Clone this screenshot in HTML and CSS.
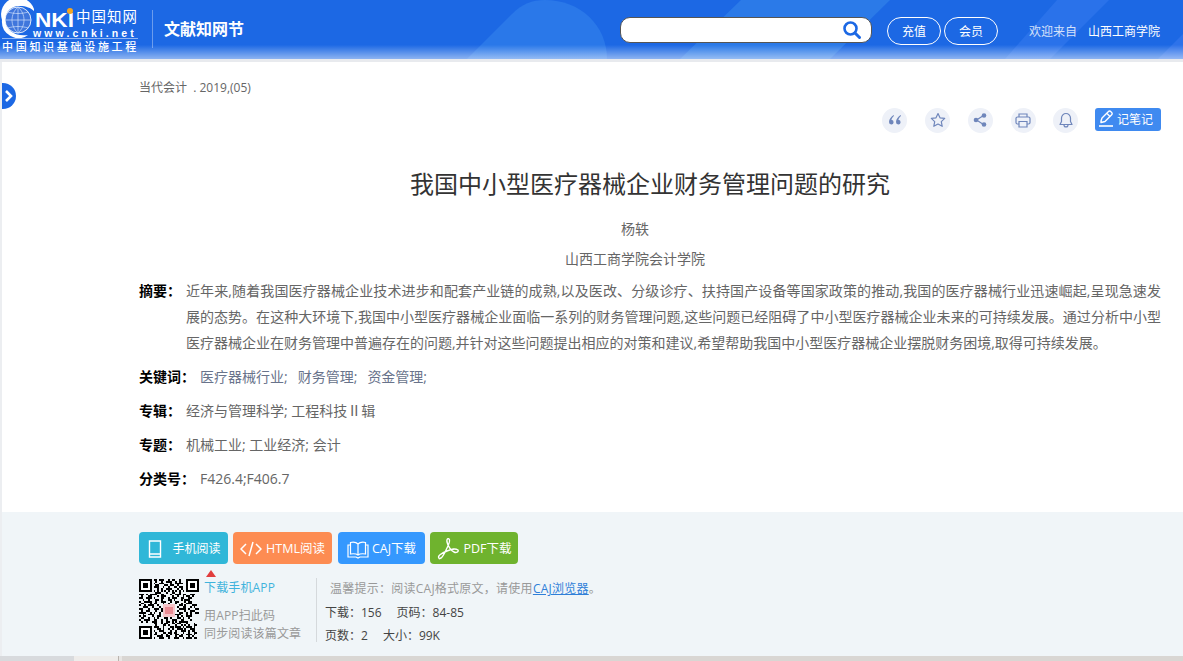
FILE: index.html
```html
<!DOCTYPE html>
<html lang="zh-CN">
<head>
<meta charset="utf-8">
<title>我国中小型医疗器械企业财务管理问题的研究</title>
<link rel="stylesheet" href="styles.css">
</head>
<body>
<header class="topbar">
  <svg class="topbar-art" width="1183" height="59" viewBox="0 0 1183 59">
    <defs>
      <linearGradient id="fade" x1="0" y1="0" x2="0" y2="1"><stop offset=".76" stop-color="#fff" stop-opacity="0"/><stop offset="1" stop-color="#fff" stop-opacity=".5"/></linearGradient>
    </defs>
    <path d="M467 59L512 14C522 4 532 0 545 0C580 0 607 25 607 59Z" fill="#2a78e9"/>
    <path d="M680 59L741 0H890L830 59Z" fill="#2b7ae8"/>
    <path d="M1005 59L1057 0H1109L1050 59Z" fill="#2a72ea"/>
    <path d="M1158 59L1183 34V59Z" fill="#2d72ea"/>
    <rect width="1183" height="59" fill="url(#fade)"/>
  </svg>
  <div class="logo">
    <svg class="logo-globe" width="36" height="38" viewBox="0 0 36 38">
      <circle cx="18" cy="20" r="13" fill="#3f76dc" stroke="#dfe9fa" stroke-width="1"/>
      <path d="M5 20h26M18 7v26M8 12c6 2 14 2 20 0M8 28c6-2 14-2 20 0M18 7c-8 7-8 19 0 26M18 7c8 7 8 19 0 26" fill="none" stroke="#cfe0fa" stroke-width=".7"/>
      <path d="M34 9A16.500 16.500 0 0 0 2 20A16.500 16.500 0 0 0 28 35C15 37 5.500 30 5 20C5.500 11 12 5.500 20 6C26 6 31 8 34 11Z" fill="#fff"/>
    </svg>
    <span class="logo-nki">NKI</span>
    <span class="logo-dot"></span>
    <span class="logo-cn">中国知网</span>
    <span class="logo-url">www.cnki.net</span>
    <span class="logo-rule"></span>
    <span class="logo-sub">中国知识基础设施工程</span>
  </div>
  <span class="divider"></span>
  <div class="brand">文献知网节</div>
  <div class="search">
    <svg width="20" height="20" viewBox="0 0 20 20"><circle cx="8.500" cy="8.500" r="6" fill="none" stroke="#1c68e4" stroke-width="2.600"/><path d="M13 13l4.500 4.500" stroke="#1c68e4" stroke-width="3" stroke-linecap="round"/></svg>
  </div>
  <a class="pill pill-first">充值</a>
  <a class="pill">会员</a>
  <div class="welcome">欢迎来自</div>
  <div class="org">山西工商学院</div>
</header>

<a class="side-toggle"><svg width="10" height="14" viewBox="0 0 10 14"><path d="M2 2l5 5-5 5" fill="none" stroke="#fff" stroke-width="2.600"/></svg></a>

<main class="article">
  <div class="source">当代会计&nbsp; . 2019,(05)</div>
  <div class="tools">
    <a class="tool"><svg width="16" height="16" viewBox="0 0 16 16"><path d="M6.500 3C4 5 2 7 2 10a2.300 2.300 0 1 0 2.400-2.200C4.800 6.500 5.700 5 7 4ZM13.500 3C11 5 9 7 9 10a2.300 2.300 0 1 0 2.400-2.200C11.800 6.500 12.700 5 14 4Z" fill="#6f86bb"/></svg></a>
    <a class="tool"><svg width="16" height="16" viewBox="0 0 16 16"><path d="M8 1.500l2 4.300 4.700.6-3.400 3.200.9 4.700L8 12l-4.200 2.300.9-4.700L1.300 6.400 6 5.800Z" fill="none" stroke="#6f86bb" stroke-width="1.200" stroke-linejoin="round"/></svg></a>
    <a class="tool"><svg width="16" height="16" viewBox="0 0 16 16"><path d="M11.500 3.500l-7 4.500 7 4.500" fill="none" stroke="#6f86bb" stroke-width="1.200"/><circle cx="4" cy="8" r="2.300" fill="#6f86bb"/><circle cx="12" cy="3.500" r="2.300" fill="#6f86bb"/><circle cx="12" cy="12.500" r="2.300" fill="#6f86bb"/></svg></a>
    <a class="tool"><svg width="16" height="16" viewBox="0 0 16 16"><path d="M4 5V2h8v3M4 12H2.500A1.500 1.500 0 0 1 1 10.500V6.500A1.500 1.500 0 0 1 2.500 5h11A1.500 1.500 0 0 1 15 6.500v4a1.500 1.500 0 0 1-1.500 1.500H12M4 9.500h8V15H4Z" fill="none" stroke="#6f86bb" stroke-width="1.200"/></svg></a>
    <a class="tool"><svg width="16" height="16" viewBox="0 0 16 16"><path d="M8 1.500a4.500 4.500 0 0 0-4.500 4.500v3.500L2 12.500h12l-1.500-3V6A4.500 4.500 0 0 0 8 1.500ZM6 13c0 2.600 4 2.600 4 0" fill="none" stroke="#6f86bb" stroke-width="1.200" stroke-linejoin="round"/></svg></a>
    <a class="note-btn"><svg width="17" height="18" viewBox="0 0 17 18"><path d="M3 11l1-3 6.500-6.500a1.500 1.500 0 0 1 2.200 0l1 1a1.500 1.500 0 0 1 0 2.200L7 11.500 3 12.500ZM9 3.500l3.500 3.500" fill="none" stroke="#fff" stroke-width="1.400" stroke-linejoin="round"/><path d="M1 16h14" stroke="#fff" stroke-width="1.600"/></svg>记笔记</a>
  </div>
  <h1 class="title">我国中小型医疗器械企业财务管理问题的研究</h1>
  <div class="author">杨轶</div>
  <div class="affil">山西工商学院会计学院</div>
  <div class="row row-abstract"><span class="label">摘要：</span><p class="abstract">近年来,随着我国医疗器械企业技术进步和配套产业链的成熟,以及医改、分级诊疗、扶持国产设备等国家政策的推动,我国的医疗器械行业迅速崛起,呈现急速发展的态势。在这种大环境下,我国中小型医疗器械企业面临一系列的财务管理问题,这些问题已经阻碍了中小型医疗器械企业未来的可持续发展。通过分析中小型医疗器械企业在财务管理中普遍存在的问题,并针对这些问题提出相应的对策和建议,希望帮助我国中小型医疗器械企业摆脱财务困境,取得可持续发展。</p></div>
  <div class="row"><span class="label">关键词：</span><span class="value"><span class="kw">医疗器械行业;</span><span class="kw">财务管理;</span><span class="kw">资金管理;</span></span></div>
  <div class="row"><span class="label">专辑：</span><span class="value">经济与管理科学; 工程科技Ⅱ辑</span></div>
  <div class="row"><span class="label">专题：</span><span class="value">机械工业; 工业经济; 会计</span></div>
  <div class="row"><span class="label">分类号：</span><span class="value">F426.4;F406.7</span></div>
</main>

<section class="panel">
  <div class="actions">
    <a class="act act-phone"><svg width="18" height="20" viewBox="0 0 18 20"><path d="M3.500 2h11v16h-11ZM3.500 15h11" fill="none" stroke="#fff" stroke-width="1.400"/></svg>手机阅读</a>
    <a class="act act-html"><svg width="22" height="18" viewBox="0 0 22 18"><path d="M6 4l-5 5 5 5M16 4l5 5-5 5M13 2L9 16" fill="none" stroke="#fff" stroke-width="1.500"/></svg>HTML阅读</a>
    <a class="act act-caj"><svg width="22" height="20" viewBox="0 0 22 20"><path d="M11 5C9 3 6 3 3.500 3.500V15c3-.5 5.500-.5 7.500 1 2-1.500 4.500-1.500 7.500-1V3.500C16 3 13 3 11 5ZM11 5v11M3.500 6H1v12h8l2 1 2-1h8V6h-2.500" fill="none" stroke="#fff" stroke-width="1.200"/></svg>CAJ下载</a>
    <a class="act act-pdf"><svg width="24" height="22" viewBox="0 0 24 22"><path d="M3 20c-2-2 3-5 8-7s8-3 11-1c1 2-2 3-4 2-3-1-6-6-7-10-.5-3 1-4 2-3s0 5-2 9-4 9-6 10-2 1-2 0" fill="none" stroke="#fff" stroke-width="1.400"/></svg>PDF下载</a>
  </div>
  <div class="info">
    <div class="app">
      <span class="arrow"></span>
      <svg class="qr" width="60" height="60" viewBox="0 0 33 33" shape-rendering="crispEdges">
        <path d="M.5.500h6v6h-6ZM26.500.500h6v6h-6ZM.5 26.500h6v6h-6Z" fill="#fff" stroke="#000"/>
        <path d="M2 2h3v3H2ZM28 2h3v3h-3ZM2 28h3v3H2Z" fill="#000"/>
        <path stroke="#000" fill="none" d="M8 .5h2m1 0h3m2 0h1m1 0h2m2 0h1M9 1.500h1m2 0h1m2 0h3m2 0h1m1 0h1M8 2.500h1m2 0h3m3 0h1m2 0h4M9 3.500h2m3 0h2m1 0h2m2 0h1M8 4.500h3m2 0h1m2 0h1m2 0h2m1 0h2M10 5.500h1m1 0h1m2 0h3m3 0h1m1 0h1M8 6.500h1m1 0h1m1 0h1m1 0h1m1 0h1m1 0h1m1 0h1m1 0h1m1 0h1M9 7.500h3m3 0h1m2 0h2m2 0h1M0 8.500h3m1 0h1m1 0h4m2 0h2m3 0h1m2 0h3m1 0h2m2 0h3M1 9.500h1m3 0h2m3 0h1m1 0h3m3 0h1m2 0h1m2 0h1m1 0h2m1 0h1M0 10.500h2m2 0h3m1 0h1m3 0h2m2 0h1m1 0h3m2 0h2m2 0h2M2 11.500h1m2 0h1m3 0h2m1 0h1m3 0h2m1 0h1m3 0h1m1 0h3M0 12.500h1m2 0h4m2 0h1m2 0h3m2 0h1m2 0h2m3 0h1m1 0h2M1 13.500h2m3 0h1m1 0h2m3 0h1m2 0h1m3 0h1m2 0h1m2 0h3M0 14.500h1m2 0h1m1 0h3m2 0h1m2 0h1M22 14.500h2m1 0h1m3 0h3M2 15.500h3m2 0h1m3 0h1m1 0h1M21 15.500h1m2 0h2m2 0h1m1 0h1M0 16.500h2m3 0h1m2 0h3m1 0h1M22 16.500h4m1 0h1m3 0h2M1 17.500h1m2 0h2m3 0h1m2 0h2M21 17.500h1m3 0h1m2 0h3M0 18.500h4m2 0h1m1 0h1m2 0h1m1 0h1M22 18.500h2m2 0h1m1 0h1m2 0h2M2 19.500h1m2 0h3m3 0h1m1 0h3m2 0h1m1 0h3m3 0h1m1 0h1M0 20.500h1m1 0h2m3 0h1m2 0h2m2 0h1m2 0h2m2 0h1m1 0h1m2 0h3M1 21.500h2m2 0h1m2 0h1m1 0h1m3 0h2m1 0h1m3 0h2m1 0h1m2 0h1M0 22.500h1m2 0h3m2 0h2m2 0h1m2 0h1m2 0h3m2 0h2m3 0h1M1 23.500h1m2 0h1m2 0h3m2 0h1m2 0h2m1 0h1m1 0h1m1 0h5M8 24.500h2m2 0h1m1 0h2m2 0h2m1 0h2m3 0h1m3 0h1M9 25.500h1m3 0h2m1 0h1m3 0h1m2 0h1m1 0h1m1 0h1m2 0h2M8 26.500h3m2 0h1m3 0h2m1 0h3m1 0h1m1 0h3m1 0h1M10 27.500h2m1 0h1m2 0h1m1 0h1m2 0h3m1 0h1m2 0h3M8 28.500h1m2 0h3m3 0h1m2 0h1m2 0h3m1 0h1m1 0h2M9 29.500h1m3 0h2m1 0h2m1 0h2m3 0h1m2 0h1m2 0h2M8 30.500h2m2 0h1m2 0h1m1 0h1m2 0h2m1 0h1m2 0h3m1 0h1M10 31.500h3m2 0h2m3 0h1m1 0h2m3 0h1m1 0h1M8 32.500h1m2 0h3m2 0h1m2 0h3m2 0h1m1 0h3m1 0h2"/>
        <rect x="13" y="14" width="7" height="7" fill="#f5c3c8"/>
        <rect x="14.500" y="15.500" width="4" height="4" fill="#e88a93"/>
      </svg>
      <div class="app-text">
        <a class="app-link">下载手机APP</a>
        <div class="app-hint">用APP扫此码<br>同步阅读该篇文章</div>
      </div>
    </div>
    <div class="meta">
      <div class="tip">温馨提示：阅读CAJ格式原文，请使用<a class="tip-link">CAJ浏览器</a>。</div>
      <div class="meta-row"><span>下载：156</span><span>页码：84-85</span></div>
      <div class="meta-row meta-row-last"><span>页数：2</span><span>大小：99K</span></div>
    </div>
  </div>
</section>
<div class="bottom-strip"><span class="strip-a"></span><span class="strip-b"></span><span class="strip-c"></span></div>
</body>
</html>
```
FILE: styles.css
```css
* { box-sizing: border-box; }
html, body { margin: 0; padding: 0; }
body {
  width: 1183px;
  height: 661px;
  overflow: hidden;
  position: relative;
  background: #fff;
  font-family: "Open Sans", "Noto Sans CJK SC", sans-serif;
  color: #555;
  font-size: 14px;
}
a { text-decoration: none; }

.topbar {
  height: 62px;
  border-bottom: 3px solid #e8eaee;
  display: flex;
  align-items: flex-start;
  color: #fff;
  background: #1c68e4;
  position: relative;
}
.topbar > * { position: relative; }
.topbar > .topbar-art { position: absolute; left: 0; top: 0; }
.logo { width: 152px; height: 59px; flex: none; }
.logo-globe { position: absolute; left: 0; top: 0; }
.logo-nki { position: absolute; left: 35px; top: 12px; font: bold 20px/16px "Liberation Sans", sans-serif; transform: scaleX(1.13); transform-origin: left; }
.logo-dot { position: absolute; left: 67px; top: 8px; width: 6px; height: 6px; border-radius: 50%; background: #f5a623; }
.logo-cn { position: absolute; left: 76px; top: 6px; font: 14.500px/20px "Noto Sans CJK SC", sans-serif; letter-spacing: 1px; white-space: nowrap; }
.logo-url { position: absolute; left: 33px; top: 29px; font: bold 10.500px/9px "Liberation Sans", sans-serif; letter-spacing: 3.100px; white-space: nowrap; }
.logo-rule { position: absolute; left: 2px; top: 38px; width: 136px; height: 1px; background: rgba(255,255,255,.5); }
.logo-sub { position: absolute; left: 2px; top: 39px; font: 500 11px/14px "Noto Sans CJK SC", sans-serif; letter-spacing: 2.700px; white-space: nowrap; }
.divider { flex: none; width: 1px; height: 38px; margin-top: 10px; background: rgba(255,255,255,.35); }
.brand { margin: 17px 0 0 11px; width: 80px; flex: none; font-size: 16px; line-height: 24px; font-weight: 700; white-space: nowrap; }
.search {
  margin: 17px 0 0 376px;
  width: 252px; height: 26px; flex: none;
  background: #fff; border: 1px solid #555; border-radius: 10px;
  display: flex; align-items: center; justify-content: flex-end; padding-right: 9px;
}
.pill {
  margin: 17px 0 0 3px;
  width: 54px; height: 28px; flex: none;
  border: 1px solid #fff; border-radius: 14px;
  color: #fff; text-align: center; font-size: 12px; line-height: 27px;
}
.pill-first { margin-left: 15px; }
.welcome { margin: 22px 0 0 31px; font-size: 12px; line-height: 20px; opacity: .8; white-space: nowrap; }
.org { margin: 22px 0 0 11px; font-size: 12px; line-height: 20px; white-space: nowrap; }

.side-toggle {
  position: absolute; left: 2px; top: 83px;
  width: 14px; height: 26px;
  background: #1c68e4;
  border-radius: 0 13px 13px 0;
  display: flex; align-items: center; justify-content: center;
}
.article {
  height: 450px;
  margin-left: 2px;
  padding: 0 22px 0 137px;
}
body::before { content: ""; position: absolute; left: 0; top: 62px; width: 2px; height: 594px; background: #eceef1; }
.source { padding-top: 17px; font-size: 12px; line-height: 18px; color: #666; }
.tools { margin-top: 10px; height: 26px; display: flex; justify-content: flex-end; align-items: center; gap: 17.750px; }
.tool { width: 25px; height: 25px; border-radius: 50%; background: #eef1f8; display: flex; align-items: center; justify-content: center; }
.note-btn {
  margin: -2px 0 0 -1px;
  width: 66px; height: 23px; border-radius: 3px; padding-left: 3px;
  background: #3f8af0; color: #fff; font-size: 12px; line-height: 23px;
  display: flex; align-items: center; gap: 2px;
  white-space: nowrap;
}
.title { margin: 34px 0 0; font-size: 24px; line-height: 34px; font-weight: 400; color: #333; text-align: center; }
.author { margin-top: 18px; padding-right: 30px; line-height: 20px; color: #666; text-align: center; }
.affil { margin-top: 10px; padding-right: 30px; line-height: 20px; color: #666; text-align: center; }
.row { display: flex; align-items: flex-start; line-height: 20px; margin-top: 14px; color: #666; }
.row-abstract { margin: 12px 0 -3px; }
.label { flex: none; margin-right: 5px; font-weight: 700; color: #000; white-space: nowrap; }
.abstract { margin: -3px 0 0; flex: 1; line-height: 26px; text-align: justify; color: #666; }
.kw { margin-right: 10px; color: #68738b; }
.panel {
  margin-left: 2px;
  height: 144px;
  background: #f0f5f8;
  padding: 20px 0 0 137px;
}
.actions { display: flex; gap: 5px; }
.act {
  height: 32px; border-radius: 4px; color: #fff; font-size: 12.500px; line-height: 30px; padding-top: 2px;
  display: flex; align-items: center; justify-content: center; gap: 5px; white-space: nowrap;
}
.act-phone { width: 89px; background: #30b7d8; gap: 8px; font-size: 12px; }
.act-html { width: 99px; background: #fd8c52; gap: 4px; }
.act-caj { width: 87px; background: #3598fe; margin-left: 1px; gap: 3px; }
.act-pdf { width: 88px; background: #6fb32e; gap: 3px; }
.info { display: flex; margin-top: 14px; }
.app { position: relative; display: flex; width: 177px; height: 64px; }
.arrow { position: absolute; left: 67px; top: -8px; border: 5px solid transparent; border-top: 0; border-bottom: 7px solid #e13d3d; }
.qr { flex: none; margin-top: 1px; }
.app-text { margin: 1px 0 0 5px; font-size: 12px; letter-spacing: .15px; white-space: nowrap; }
.app-link { display: block; color: #3fb3dc; line-height: 18px; }
.app-hint { margin-top: 10px; color: #999; line-height: 18px; }
.meta { border-left: 1px solid #d5d9dc; padding-left: 8px; height: 64px; color: #444; font-size: 12px; }
.tip { padding-left: 5px; color: #999; line-height: 18px; margin-top: 2px; letter-spacing: .25px; white-space: nowrap; }
.tip-link { color: #2f7fd8; text-decoration: underline; }
.meta-row { display: flex; gap: 15px; line-height: 18px; margin-top: 6px; }
.meta-row-last { margin-top: 5px; }
.bottom-strip { height: 5px; display: flex; background: #d9d6d3; }
.strip-a { width: 74px; background: #d8dadd; }
.strip-b { width: 45px; background: #eeecea; border-right: 1px solid #b9b3ae; }
.strip-c { flex: 1; border-left: 3px solid #e8e6e4; }
```
